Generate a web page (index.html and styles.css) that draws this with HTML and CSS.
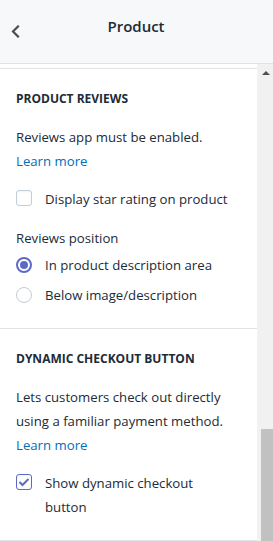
FILE: index.html
```html
<!DOCTYPE html>
<html>
<head>
<meta charset="utf-8">
<link rel="stylesheet" href="styles.css">
</head>
<body>
<div class="app">
  <header class="topbar">
    <button class="back" aria-label="Back">
      <svg width="9" height="13" viewBox="0 0 9 13"><path d="M7 1.5 L2 6.5 L7 11.5" fill="none" stroke="#454f5b" stroke-width="2.2" stroke-linecap="square"/></svg>
    </button>
    <h1 class="title">Product</h1>
  </header>
  <div class="body">
    <div class="content">
      <div class="prev"></div>
      <section class="section">
        <h2 class="heading">PRODUCT REVIEWS</h2>
        <p class="text">Reviews app must be enabled.<br><a class="link" href="#">Learn more</a></p>
        <label class="check">
          <span class="box"></span>
          <span class="lbl">Display star rating on product</span>
        </label>
        <div class="group">
          <div class="glabel">Reviews position</div>
          <label class="radio">
            <span class="dot on"></span>
            <span class="lbl">In product description area</span>
          </label>
          <label class="radio">
            <span class="dot"></span>
            <span class="lbl">Below image/description</span>
          </label>
        </div>
      </section>
      <section class="section">
        <h2 class="heading">DYNAMIC CHECKOUT BUTTON</h2>
        <p class="text">Lets customers check out directly using a familiar payment method.<br><a class="link" href="#">Learn more</a></p>
        <label class="check">
          <span class="box checked">
            <svg width="12" height="10" viewBox="0 0 12 10"><path d="M1.5 5 L4.5 8 L10.5 2" fill="none" stroke="#5c6ac4" stroke-width="2"/></svg>
          </span>
          <span class="lbl">Show dynamic checkout<br>button</span>
        </label>
      </section>
    </div>
    <div class="scrollbar">
      <div class="arrow"></div>
      <div class="track"></div>
      <div class="thumb"></div>
    </div>
  </div>
</div>
</body>
</html>
```
FILE: styles.css
```css
* { box-sizing: border-box; }
html, body { margin: 0; padding: 0; }
body {
  font-family: "Open Sans", "Noto Sans", sans-serif;
  color: #212b36;
  background: #fff;
  width: 273px;
  height: 541px;
  overflow: hidden;
}
.app { display: flex; flex-direction: column; height: 541px; }
.topbar {
  height: 64px;
  flex: none;
  background: #f6f8fa;
  border-bottom: 1px solid #dfe3e8;
  display: flex;
  align-items: flex-start;
}
.back {
  border: 0;
  background: transparent;
  padding: 0;
  margin: 25px 0 0 11px;
  width: 10px;
  height: 14px;
  display: flex;
}
.title {
  flex: 1;
  margin: 16px 22px 0 0;
  text-align: center;
  font-size: 15px;
  font-weight: 600;
  line-height: 20px;
}
.body { flex: 1; display: flex; min-height: 0; }
.content {
  width: 258px;
  flex: none;
  border-right: 1px solid #f2f2f2;
  display: flex;
  flex-direction: column;
}
.prev { height: 6px; border-bottom: 1px solid #dfe3e8; }
.section {
  padding: 20px 16px 21px;
  border-bottom: 1px solid #dfe3e8;
  display: flex;
  flex-direction: column;
}
.heading {
  margin: 0;
  font-size: 12px;
  font-weight: 700;
  line-height: 20px;
}
.text {
  margin: 16px 0 0;
  font-size: 13.2px;
  line-height: 24px;
}
.link { color: #006fbb; text-decoration: none; }
.check {
  margin-top: 14px;
  display: flex;
  align-items: flex-start;
  font-size: 13.2px;
  line-height: 24px;
}
.box {
  width: 16px;
  height: 16px;
  border: 1px solid #c4cdd5;
  border-radius: 3px;
  margin-top: 3px;
  margin-right: 13px;
  flex: none;
  background: #fff;
  display: flex;
  align-items: center;
  justify-content: center;
  box-shadow: inset 0 1px 2px rgba(0,0,0,0.05);
}
.box.checked { border-color: #5c6ac4; border-width: 1.5px; }
.group { margin-top: 15px; display: flex; flex-direction: column; gap: 6px; }
.glabel { font-size: 13.2px; line-height: 24px; margin-bottom: -3px; }
.radio { display: flex; align-items: center; font-size: 13.2px; line-height: 24px; }
.dot {
  width: 16px;
  height: 16px;
  border-radius: 50%;
  border: 1px solid #c4cdd5;
  margin-right: 13px;
  flex: none;
  background: #fff;
  display: flex;
  align-items: center;
  justify-content: center;
}
.dot.on { border: 2px solid #5c6ac4; }
.dot.on::after {
  content: "";
  width: 8px;
  height: 8px;
  border-radius: 50%;
  background: #5c6ac4;
}
.scrollbar {
  flex: 1;
  background: #f1f1f1;
  display: flex;
  flex-direction: column;
  align-items: center;
}
.arrow {
  margin-top: 7px;
  width: 0;
  height: 0;
  border-left: 4px solid transparent;
  border-right: 4px solid transparent;
  border-bottom: 4px solid #505050;
}
.track { flex: 1; }
.thumb {
  width: 12px;
  margin-left: 3px;
  height: 112px;
  background: #c1c1c1;
}
```
